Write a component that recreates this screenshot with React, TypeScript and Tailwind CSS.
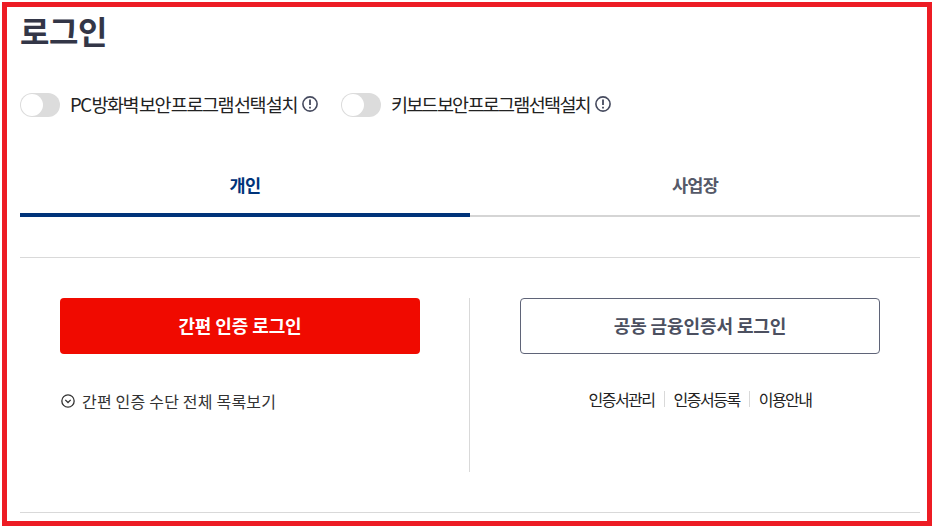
import { ReactNode } from "react";

const font = "font-['Noto_Sans_CJK_KR','Noto_Sans',sans-serif]";

function Toggle({ children }: { children: ReactNode }) {
  return (
    <div className="flex h-6 items-center">
      <span className="flex h-6 w-10 items-center rounded-full bg-[#dcdcdc] pl-[1px]">
        <span className="h-[22px] w-[22px] rounded-full bg-white" />
      </span>
      <span className="ml-[10px] -translate-y-[1px] text-[18.5px] leading-6 text-[#222]">{children}</span>
      <svg className="ml-[5px] h-4 w-4 -translate-y-[1px] text-[#454a5e]" viewBox="0 0 16 16" fill="none" stroke="currentColor">
        <circle cx="8" cy="8" r="7.1" strokeWidth="1.6" />
        <path d="M8 3.6v5.4M8 10.8v1.8" strokeWidth="1.8" />
      </svg>
    </div>
  );
}

export default function App() {
  return (
    <div className={`h-[528px] w-[935px] overflow-hidden bg-white pl-[2px] pt-[2px] ${font}`}>
      <div className="h-[524px] w-[930px] border-[5px] border-[#ed1c24] pl-[13px] pr-[7px]">
        <h1 className="mt-[1px] text-[32px] font-bold leading-[44px] tracking-[-0.5px] text-[#333647]">로그인</h1>
        <div className="mt-[41px] flex gap-[23px]">
          <Toggle>
            <span className="tracking-[-1.45px] [word-spacing:-1.9px]">PC 방화벽 보안 프로그램 선택 설치</span>
          </Toggle>
          <Toggle>
            <span className="tracking-[-1.85px] [word-spacing:-1.9px]">키보드 보안 프로그램 선택 설치</span>
          </Toggle>
        </div>
        <div className="mt-[40px] flex">
          <div className="h-[60px] w-[450px] border-b-4 border-[#00337a] pt-[16px] text-center text-[17.5px] font-bold leading-6 tracking-[-0.5px] text-[#00337a]">
            개인
          </div>
          <div className="h-[60px] w-[450px] border-b-2 border-[#d5d5d5] pt-[16px] text-center text-[17.5px] font-bold leading-6 tracking-[-0.7px] text-[#555968]">
            사업장
          </div>
        </div>
        <div className="mt-[40px] border-t border-[#d9d9d9]">
          <div className="flex h-[255px] border-b border-[#d9d9d9] pt-[40px]">
            <div className="h-[174px] w-[450px] border-r border-[#d9d9d9] pl-[40px]">
              <button className="h-[56px] w-[360px] rounded bg-[#f00a00] pb-[2px] text-[18px] font-bold tracking-[-0.1px] text-white">
                간편 인증 로그인
              </button>
              <div className="mt-[35px] flex items-center text-[#333]">
                <svg className="ml-[1px] h-[14px] w-[14px]" viewBox="0 0 15 15" fill="none" stroke="currentColor" strokeWidth="1.4">
                  <circle cx="7.5" cy="7.5" r="6.6" />
                  <path d="M4.6 6.3 7.5 9.2l2.9-2.9" />
                </svg>
                <span className="ml-[7px] text-[16px] leading-6 tracking-[0.2px]">간편 인증 수단 전체 목록보기</span>
              </div>
            </div>
            <div className="w-[450px] pl-[50px]">
              <button className="h-[56px] w-[360px] rounded border border-[#5f6478] bg-white pb-[1px] text-[18px] font-bold tracking-[-0.1px] text-[#4c5060]">
                공동 금융인증서 로그인
              </button>
              <div className="mt-[33px] flex w-[360px] justify-center text-[16px] leading-6 tracking-[-1.5px] text-[#222]">
                <span>인증서관리</span>
                <span className="mx-[9px] my-[4px] w-px bg-[#d9d9d9]" />
                <span>인증서등록</span>
                <span className="mx-[9px] my-[4px] w-px bg-[#d9d9d9]" />
                <span>이용안내</span>
              </div>
            </div>
          </div>
        </div>
      </div>
    </div>
  );
}
